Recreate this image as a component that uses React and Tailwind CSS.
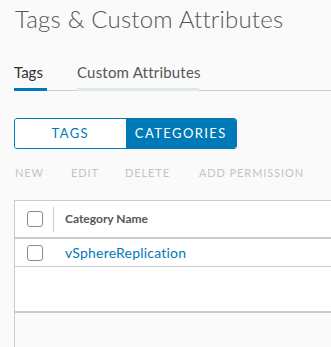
export default function App() {
  return (
    <div className="w-[331px] h-[347px] overflow-hidden bg-[#fafafa] text-[#565656]" style={{ fontFamily: "Lato, 'Noto Sans', sans-serif" }}>
      <h1 className="pl-[15px] pt-[3px] text-[24px] leading-[32px] font-light text-[#565656] tracking-[0.2px]">Tags &amp; Custom Attributes</h1>

      <div className="ml-[14px] mt-[24px] flex border-b border-[#cccccc] h-[32px] items-end whitespace-nowrap">
        <div className="w-[33px] h-full pt-[1px] border-b-[3px] border-[#0079b8] -mb-px text-[15px] text-[#313131] leading-[22px]">Tags</div>
        <div className="ml-[30px] w-[122px] h-full pt-[1px] border-b-[3px] border-[#dde7ee] -mb-px text-[15px] text-[#565656] leading-[22px] tracking-[0.2px]">Custom Attributes</div>
      </div>

      <div className="ml-[14px] mt-[27px] flex w-[223px] h-[31px] rounded-[3px] border border-[#0079b8] overflow-hidden text-[13px] tracking-[1.4px]">
        <div className="flex-1 flex items-center justify-center bg-white text-[#0079b8]">TAGS</div>
        <div className="flex-1 flex items-center justify-center bg-[#0079b8] text-white">CATEGORIES</div>
      </div>

      <div className="ml-[15px] mt-[17px] flex text-[11px] tracking-[0.9px] text-[#c4c4c4] leading-[14px]">
        <span className="w-[56px]">NEW</span>
        <span className="w-[54px]">EDIT</span>
        <span className="w-[74px]">DELETE</span>
        <span>ADD PERMISSION</span>
      </div>

      <div className="ml-[14px] mt-[20px] w-[330px] border-l border-t border-[#cccccc] bg-white">
        <div className="flex items-center h-[38px] border-b-2 border-[#cccccc]">
          <div className="w-[38px] flex justify-center pl-[1px]">
            <div className="w-[16px] h-[16px] rounded-[3px] border border-[#8c8c8c] bg-white" />
          </div>
          <div className="w-px h-[25px] bg-[#cccccc]" />
          <div className="pl-[11px] text-[12px] font-bold text-[#565656]">Category Name</div>
        </div>
        <div className="flex items-center h-[28px] border-b border-[#cccccc]">
          <div className="w-[38px] flex justify-center pl-[1px]">
            <div className="w-[16px] h-[16px] rounded-[3px] border border-[#8c8c8c] bg-white" />
          </div>
          <div className="pl-[12px] text-[14px] text-[#0079b8] tracking-[0.2px]">vSphereReplication</div>
        </div>
        <div className="h-[46px] border-b-2 border-[#cccccc]" />
        <div className="h-[40px] bg-[#fafafa]" />
      </div>
    </div>
  );
}
